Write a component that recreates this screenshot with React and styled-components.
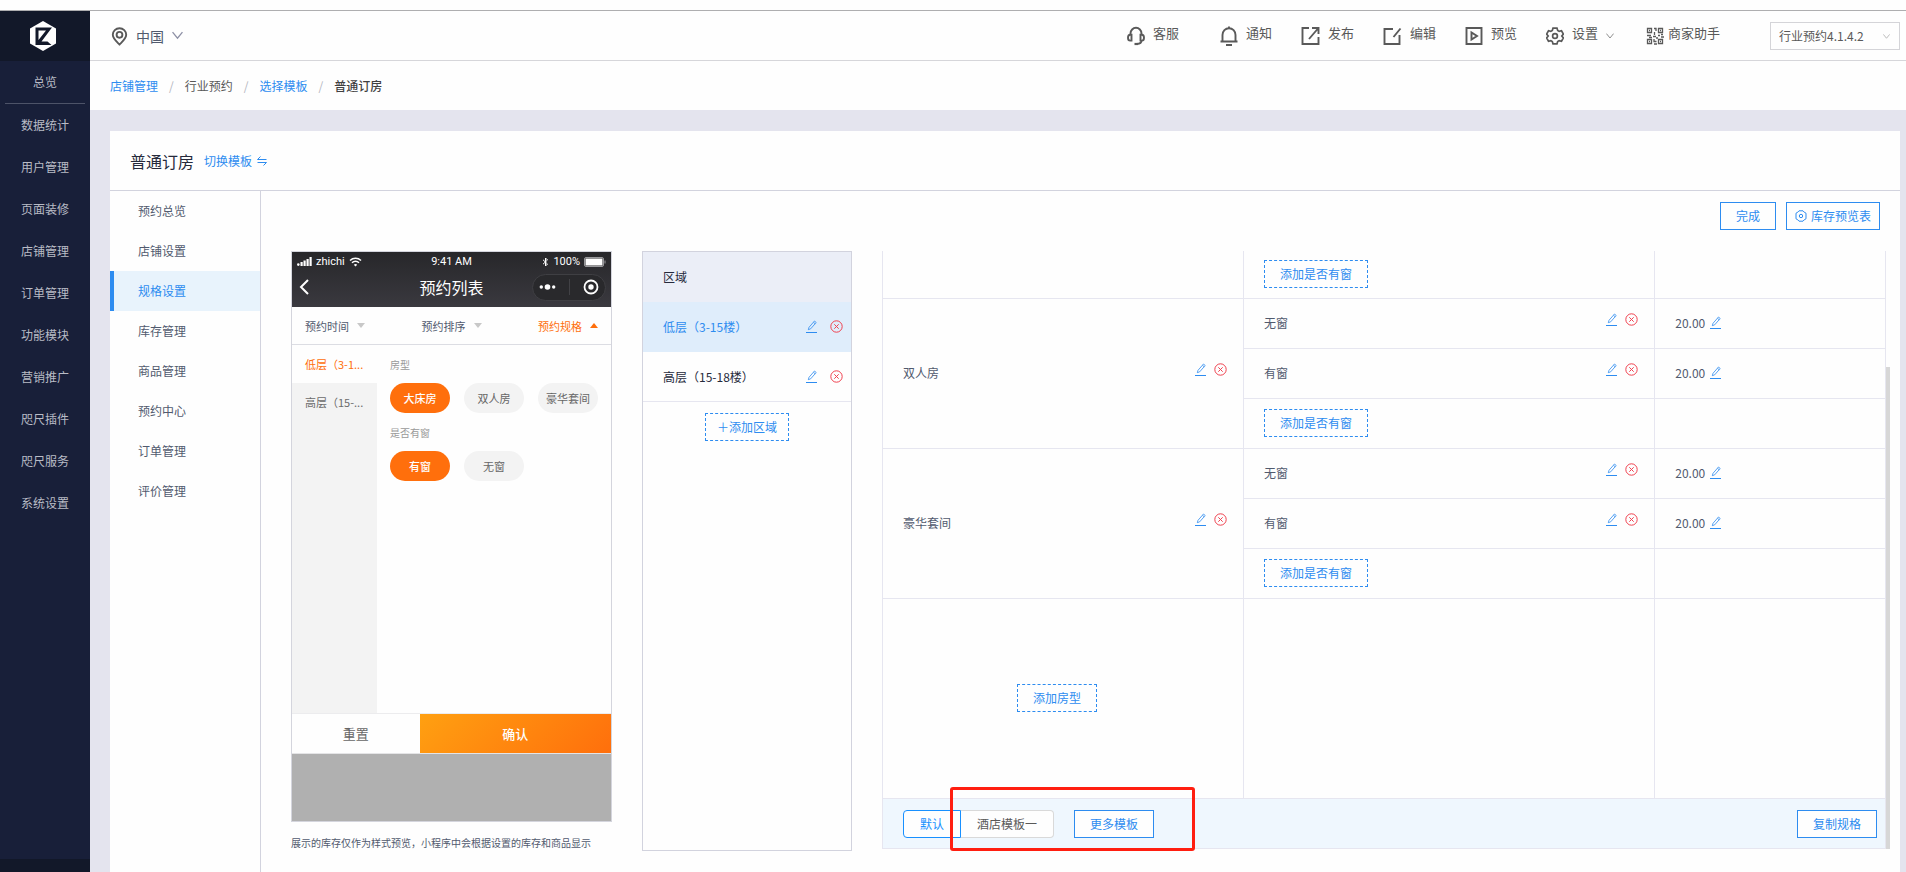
import React, { useState } from 'react'
import styled, { createGlobalStyle } from 'styled-components'

const color = {
  blue: '#2d8cf0',
  orange: '#ff6f0c',
  red: '#f0404e',
  text: '#595959',
  slate: '#515a6e',
  dark: '#262a3c',
  line: '#e6e6f0',
  frame: '#d2d3de',
  page: '#e4e4ee',
}

const GlobalStyle = createGlobalStyle`
  * {
    box-sizing: border-box;
  }

  body {
    margin: 0;
    background: #fefefe;
    color: ${color.text};
    font-family: 'Noto Sans CJK SC', sans-serif;
    font-size: 12px;
    line-height: 20px;
  }

  button, input, select {
    font: inherit;
  }

  a {
    color: inherit;
    text-decoration: none;
  }
`

const Page = styled.div`
  display: flex;
  flex-direction: column;
  min-height: 100vh;
`

const TopStrip = styled.div`
  height: 11px;
  border-bottom: 1px solid #aeaeb0;
`

const Shell = styled.div`
  display: flex;
  flex: 1;
`

/* Sidebar */

const Sidebar = styled.aside`
  display: flex;
  flex-direction: column;
  flex: none;
  width: 90px;
  background: #181f39;
`

const LogoBox = styled.a`
  display: flex;
  align-items: center;
  justify-content: center;
  height: 50px;
  padding-right: 4px;
  background: #121829;
`

const SideNav = styled.nav`
  display: flex;
  flex-direction: column;
`

const SideLink = styled.a`
  height: 42px;
  line-height: 42px;
  text-align: center;
  color: #b9bcc6;
`

const SideDivider = styled.hr`
  width: 80px;
  height: 1px;
  margin: 0 auto;
  border: 0;
  background: #4d5368;
`

const SideFoot = styled.div`
  height: 13px;
  margin-top: auto;
  background: #121829;
`

/* Header */

const Main = styled.main`
  display: flex;
  flex-direction: column;
  flex: 1;
  min-width: 0;
  background: ${color.page};
`

const Header = styled.header`
  display: flex;
  align-items: center;
  justify-content: space-between;
  height: 50px;
  padding: 0 6px 0 21px;
  background: #fefefe;
  border-bottom: 1px solid #d6d6da;
`

const PlainButton = styled.button`
  display: flex;
  align-items: center;
  padding: 0;
  border: 0;
  background: none;
  color: inherit;
  cursor: pointer;
`

const Location = styled(PlainButton)`
  gap: 8px;
  font-size: 14px;
  color: ${color.slate};
`

const Tools = styled.div`
  display: flex;
  align-items: center;
`

const Tool = styled(PlainButton)`
  gap: ${(props) => (props.$tight ? 4 : 8)}px;
  margin-right: ${(props) => props.$space || 29}px;
  font-size: 13px;

  span {
    padding-bottom: 6px;
  }
`

const VersionBox = styled.div`
  position: relative;
  width: 130px;

  svg {
    position: absolute;
    top: 11px;
    right: 10px;
    pointer-events: none;
  }
`

const VersionSelect = styled.select`
  width: 100%;
  height: 28px;
  padding: 0 8px;
  border: 1px solid #d4d4d8;
  border-radius: 0;
  background: #fefefe;
  color: ${color.text};
  appearance: none;
`

const Breadcrumb = styled.nav`
  display: flex;
  align-items: center;
  gap: 11px;
  height: 49px;
  padding-left: 20px;
  background: #fefefe;

  a {
    color: ${color.blue};
  }

  i {
    color: #b4b6be;
    font-style: normal;
  }

  strong {
    color: #404040;
    font-weight: 500;
  }
`

/* Card */

const Card = styled.section`
  display: flex;
  flex-direction: column;
  flex: 1;
  margin: 21px 6px 0 20px;
  background: #fefefe;
`

const CardHead = styled.div`
  display: flex;
  align-items: center;
  gap: 10px;
  height: 60px;
  padding: 0 20px;
  border-bottom: 1px solid ${color.frame};
`

const Title = styled.h1`
  margin: 0;
  color: ${color.dark};
  font-size: 16px;
  font-weight: 400;
`

const SwitchLink = styled.a`
  display: flex;
  align-items: center;
  gap: 5px;
  color: ${color.blue};
`

const CardBody = styled.div`
  display: flex;
  flex: 1;
`

const Menu = styled.nav`
  flex: none;
  width: 151px;
  border-right: 1px solid ${color.frame};
`

const MenuLink = styled.a`
  display: block;
  height: 40px;
  padding-left: 24px;
  border-left: 4px solid ${(props) => (props.$active ? color.blue : 'transparent')};
  background: ${(props) => (props.$active ? '#e8f3fc' : 'none')};
  color: ${(props) => (props.$active ? color.blue : color.slate)};
  line-height: 40px;
`

const Content = styled.div`
  flex: 1;
  min-width: 0;
`

const Toolbar = styled.div`
  display: flex;
  justify-content: flex-end;
  gap: 10px;
  padding: 11px 20px 21px;
`

const Button = styled.button`
  display: inline-flex;
  align-items: center;
  justify-content: center;
  gap: 4px;
  height: 28px;
  padding: 0 ${(props) => props.$pad || 15}px;
  border: 1px ${(props) => (props.$dashed ? 'dashed' : 'solid')} ${color.blue};
  background: #fefefe;
  color: ${color.blue};
  white-space: nowrap;
  cursor: pointer;
`

const Columns = styled.div`
  display: flex;
  align-items: flex-start;
  gap: 30px;
  padding: 0 10px 0 30px;
`

/* Phone preview */

const PreviewColumn = styled.div`
  flex: none;
  width: 321px;
`

const Phone = styled.div`
  display: flex;
  flex-direction: column;
  height: 571px;
  border: 1px solid #d4d5dd;
  background: #fefefe;
`

const PhoneTop = styled.div`
  height: 55px;
  padding: 0 5px;
  background: linear-gradient(#27272a, #3a393f);
  color: #fefefe;
`

const StatusRow = styled.div`
  display: grid;
  grid-template-columns: 1fr auto 1fr;
  align-items: center;
  height: 19px;
  font-family: Roboto, sans-serif;
  font-size: 11px;
  line-height: 19px;
`

const StatusGroup = styled.div`
  display: flex;
  align-items: center;
  justify-content: ${(props) => (props.$end ? 'flex-end' : 'flex-start')};
  gap: 4px;
`

const PhoneNav = styled.div`
  display: grid;
  grid-template-columns: 1fr auto 1fr;
  align-items: center;
  height: 32px;
  font-size: 16px;
`

const Capsule = styled.div`
  display: flex;
  align-items: center;
  justify-content: space-around;
  justify-self: end;
  width: 74px;
  height: 27px;
  border: 1px solid #3f3f43;
  border-radius: 14px;
  background: #29292c;
`

const FilterRow = styled.div`
  display: flex;
  justify-content: space-between;
  height: 38px;
  padding: 0 13px;
  border-bottom: 1px solid #dcdde3;
`

const Filter = styled(PlainButton)`
  gap: 8px;
  color: ${(props) => (props.$active ? color.orange : color.slate)};
  font-size: 11px;

  &::after {
    content: '';
    border: 4px solid transparent;
    border-top: ${(props) => (props.$active ? '0' : '5px solid #c8c8c8')};
    border-bottom: ${(props) => (props.$active ? `5px solid ${color.orange}` : '0')};
  }
`

const PhoneBody = styled.div`
  display: flex;
  flex: 1;
`

const FloorList = styled.div`
  display: flex;
  flex-direction: column;
  width: 86px;
  background: #f3f3f3;
`

const Floor = styled(PlainButton)`
  height: 38px;
  padding: 0 13px;
  background: ${(props) => (props.$active ? '#fefefe' : 'none')};
  color: ${(props) => (props.$active ? color.orange : '#6b6b6b')};
  font-size: 11px;
`

const SpecList = styled.div`
  padding: 10px 13px;
`

const SpecTitle = styled.div`
  color: #999;
  font-size: 10px;
`

const PillRow = styled.div`
  display: flex;
  gap: 14px;
  padding: 8px 0 10px;
`

const Pill = styled.button`
  width: 60px;
  height: 30px;
  padding: 0;
  border: 0;
  border-radius: 15px;
  background: ${(props) => (props.$active ? color.orange : '#f3f3f3')};
  color: ${(props) => (props.$active ? '#fefefe' : '#666')};
  font-size: 11px;
  font-weight: ${(props) => (props.$active ? 500 : 400)};
  cursor: pointer;
`

const PhoneActions = styled.div`
  display: grid;
  grid-template-columns: 2fr 3fr;
  height: 41px;
  border-top: 1px solid #ececee;
  border-bottom: 1px solid #e4e4e6;
`

const PhoneAction = styled.button`
  border: 0;
  background: ${(props) => (props.$primary ? `linear-gradient(135deg, #ffa011, ${color.orange})` : '#fefefe')};
  color: ${(props) => (props.$primary ? '#fefefe' : '#666')};
  font-size: 13px;
  font-weight: ${(props) => (props.$primary ? 500 : 400)};
  cursor: pointer;
`

const PhoneFoot = styled.div`
  height: 67px;
  background: #b0b0b0;
`

const Note = styled.p`
  margin: 11px 0 0;
  color: ${color.slate};
  font-size: 10px;
  white-space: nowrap;
`

/* Region list */

const RegionPanel = styled.div`
  flex: none;
  width: 210px;
  height: 600px;
  border: 1px solid ${color.frame};
  text-align: center;
`

const RegionHead = styled.h2`
  height: 50px;
  margin: 0;
  padding-left: 20px;
  background: #ebeef7;
  color: ${color.dark};
  font-size: 12px;
  font-weight: 400;
  line-height: 50px;
  text-align: left;
`

const RegionRow = styled.div`
  display: flex;
  align-items: center;
  justify-content: space-between;
  height: 50px;
  margin-bottom: ${(props) => (props.$active ? 0 : 11)}px;
  padding: 0 8px 0 20px;
  border-bottom: 1px solid ${(props) => (props.$active ? '#dfedfb' : color.line)};
  background: ${(props) => (props.$active ? '#dfedfb' : 'none')};
  color: ${(props) => (props.$active ? color.blue : color.dark)};
`

const RowIcons = styled.span`
  display: flex;
  align-items: center;
  gap: ${(props) => props.$gap || 8}px;
`

/* Spec table */

const TableColumn = styled.div`
  flex: 1;
  min-width: 0;
`

const Scroller = styled.div`
  display: flex;
`

const ScrollBody = styled.div`
  flex: 1;
  min-width: 0;
`

const ScrollThumb = styled.div`
  flex: none;
  width: 4px;
  margin-top: 116px;
  background: #d7d7d7;
`

const Table = styled.table`
  width: 100%;
  border-left: 1px solid ${color.line};
  border-spacing: 0;
  table-layout: fixed;
  color: ${color.slate};
`

const Cell = styled.td`
  height: ${(props) => props.$height || 50}px;
  padding: 0 ${(props) => (props.$center ? 32 : 16)}px 2px 20px;
  border-right: 1px solid ${color.line};
  border-bottom: 1px solid ${color.line};
  text-align: ${(props) => (props.$center ? 'center' : 'left')};

  ${Button} {
    vertical-align: middle;
  }
`

const CellRow = styled.div`
  display: flex;
  align-items: center;
  justify-content: ${(props) => (props.$start ? 'flex-start' : 'space-between')};
  gap: 5px;

  ${RowIcons} {
    padding-bottom: 6px;
  }
`

const TableFoot = styled.div`
  position: relative;
  display: flex;
  align-items: center;
  height: 50px;
  padding: 0 8px 0 20px;
  border: 1px solid ${color.line};
  border-top: 0;
  background: #eff7fe;

  > ${Button}:last-of-type {
    margin-left: auto;
  }
`

const TemplateGroup = styled.div`
  display: flex;
  margin-right: 20px;
`

const TemplateOption = styled.label`
  height: 28px;
  padding: 0 16px;
  border: 1px solid ${(props) => (props.$active ? '#1890ff' : '#d9d9d9')};
  border-left-width: ${(props) => (props.$active ? 1 : 0)}px;
  background: #fefefe;
  color: ${(props) => (props.$active ? '#1890ff' : color.text)};
  line-height: 26px;
  cursor: pointer;

  &:first-child {
    border-radius: 4px 0 0 4px;
  }

  &:last-child {
    border-radius: 0 4px 4px 0;
  }

  input {
    position: absolute;
    opacity: 0;
    pointer-events: none;
  }
`

const Highlight = styled.div`
  position: absolute;
  top: -12px;
  left: 67px;
  width: 245px;
  height: 64px;
  border: 3px solid #ff1e10;
  border-radius: 3px;
  pointer-events: none;
`

/* Icons */

const Chevron = ({ size = 8, stroke = '#8a8a8a' }) => (
  <svg width={size} height={size} viewBox="0 0 10 10" fill="none" stroke={stroke} strokeWidth="1.2">
    <path d="M0.5 2 5 7.5 9.5 2" />
  </svg>
)

const Logo = () => (
  <svg width="28" height="32" viewBox="0 0 28 32">
    <path d="M14 1 27 8.500V23.500L14 31 1 23.500V8.500Z" fill="#fefefe" />
    <path
      d="M6.500 7.500H23L12.500 21.500H18.500L22.500 25H6.500ZM9.500 10.500V20L17 10.500Z"
      fill="#121829"
      fillRule="evenodd"
    />
  </svg>
)

const PinIcon = () => (
  <svg width="17" height="21" viewBox="0 -2 17 21" fill="none" stroke="#595959" strokeWidth="1.9">
    <path d="M8.500 17.500C5 14 1.800 11.500 1.800 7.800a6.700 6.600 0 0 1 13.400 0C15.200 11.500 12 14 8.500 17.500Z" />
    <circle cx="8.500" cy="7.800" r="2.900" />
  </svg>
)

const ToolIcon = ({ children, width = 18 }) => (
  <svg
    width={width}
    height="20"
    viewBox={`0 0 ${width} 20`}
    fill="none"
    stroke="#595959"
    strokeWidth="1.9"
  >
    {children}
  </svg>
)

const HeadsetIcon = () => (
  <ToolIcon>
    <path d="M3.500 9V7.500a5.500 5.700 0 0 1 11 0V9M14.500 14.500c0 2-1.500 3.300-4.500 3.500" />
    <path d="M4.500 8.800H3.200a2.200 2.900 0 0 0 0 5.800H4.500ZM13.500 8.800h1.300a2.200 2.900 0 0 1 0 5.800H13.500Z" />
    <path d="M7.500 18h3.500" strokeWidth="2.200" />
  </ToolIcon>
)

const BellIcon = () => (
  <ToolIcon>
    <path d="M2.500 15V9a6.500 6.800 0 0 1 13 0v6M0.500 15.500h17M9 0.500v2" />
    <path d="M6 19h6" strokeWidth="2" />
  </ToolIcon>
)

const PublishIcon = () => (
  <ToolIcon width={19}>
    <path d="M8 2H1.500V18H17.500V11M11 2h6.500v6M17 2.500 8 13" />
  </ToolIcon>
)

const EditIcon = () => (
  <ToolIcon width={19}>
    <path d="M10 3H1.500V18H16.500V9M17.500 2.500 10.500 11" />
  </ToolIcon>
)

const PreviewIcon = () => (
  <ToolIcon>
    <path d="M1.500 2H16.500V18H1.500Z" />
    <path d="M6.500 6.500V13.500L12 10Z" />
  </ToolIcon>
)

const GearIcon = () => (
  <ToolIcon>
    <path
      d="M7 2.200h4l.7 2.300 1.500.9 2.300-.6 1.900 3.300-1.600 1.900 1.600 1.900-1.900 3.300-2.300-.6-1.500.9L11 17.800H7l-.7-2.300-1.500-.9-2.300.6L.600 11.900 2.200 10 .600 8.100l1.900-3.300 2.300.6 1.500-.9Z"
      strokeWidth="1.700"
    />
    <circle cx="9" cy="10" r="2.400" strokeWidth="1.700" />
  </ToolIcon>
)

const QrIcon = () => (
  <ToolIcon>
    <g strokeWidth="1.300">
      <path d="M1.500 2.500h4v4h-4ZM12.500 2.500h4v4h-4ZM1.500 13.500h4v4h-4ZM12.500 13.500h4v4h-4Z" />
      <path d="M8 2.500h2v2.500M8.500 6v3M1 9.500h4M3 11.500h3M7 10.500h3M12 9.500h2M15 11h3M15 8.500h2M8 13v2.500h2.500M8 18h3M10 12h2" />
      <path d="M3 4.500h1M14 4.500h1M3 15.500h1M14 15.500h1" />
    </g>
  </ToolIcon>
)

const SwapIcon = () => (
  <svg width="10" height="10" viewBox="0 0 10 10" fill="none" stroke={color.blue}>
    <path d="M3.500 0.500 0.500 3.500H9.500M0.500 6.500H9.500L6.500 9.500" />
  </svg>
)

const StockIcon = () => (
  <svg width="12" height="12" viewBox="0 0 12 12" fill="none" stroke={color.blue}>
    <path d="M4 .800h4l1.200 1.400 1.800 1V8.800L9.200 9.800 8 11.200H4L2.800 9.800 1 8.800V3.200l1.800-1Z" />
    <circle cx="6" cy="6" r="1.700" />
  </svg>
)

const PenIcon = () => (
  <svg width="11" height="13" viewBox="0 0 11 13" fill="none" stroke={color.blue}>
    <path d="M0 12.500H11" />
    <path d="M2.300 9.700 3 7.300 8.500 1 10.200 2.500 4.700 8.800ZM7.500 2.300 9.200 3.800" strokeWidth="0.800" />
  </svg>
)

const RemoveIcon = () => (
  <svg width="13" height="13" viewBox="0 0 13 13" fill="none" stroke={color.red}>
    <circle cx="6.500" cy="6.500" r="5.700" />
    <path d="M4.300 4.300 8.700 8.700M8.700 4.300 4.300 8.700" />
  </svg>
)

const SignalIcon = () => (
  <svg width="15" height="9" viewBox="0 0 15 9" fill="#fefefe">
    <circle cx="1.300" cy="7.600" r="1.300" />
    <path d="M3.500 5h2.200v4H3.500ZM6.500 3.500h2.200V9H6.500ZM9.500 2h2.200v7H9.500ZM12.500 0h2.200v9h-2.200Z" />
  </svg>
)

const WifiIcon = () => (
  <svg width="13" height="10" viewBox="0 0 13 10" fill="none" stroke="#fefefe" strokeWidth="1.500">
    <path d="M1 3.500a8 8 0 0 1 11 0M3 5.800a5 5 0 0 1 7 0" />
    <path d="M6.500 9.500 4.800 7.800a2.400 2.400 0 0 1 3.400 0Z" fill="#fefefe" stroke="none" />
  </svg>
)

const BluetoothIcon = () => (
  <svg width="7" height="10" viewBox="0 0 7 10" fill="none" stroke="#fefefe">
    <path d="M1 2.800 5.500 7 3.500 9V1L5.500 3 1 7.200" />
  </svg>
)

const BatteryIcon = () => (
  <svg width="22" height="10" viewBox="0 0 22 10">
    <rect x="0.500" y="0.500" width="19" height="9" rx="1.500" fill="none" stroke="#99999c" />
    <rect x="1.500" y="1.500" width="17" height="7" fill="#fefefe" />
    <path d="M21 3.500V6.500" stroke="#99999c" />
  </svg>
)

const BackIcon = () => (
  <svg width="12" height="16" viewBox="0 0 12 16" fill="none" stroke="#fefefe" strokeWidth="2">
    <path d="M11 1 4 8 11 15" />
  </svg>
)

const DotsIcon = () => (
  <svg width="17" height="6" viewBox="0 0 17 6" fill="#fefefe">
    <circle cx="2.300" cy="3" r="1.700" />
    <circle cx="8.500" cy="3" r="2.800" />
    <circle cx="14.700" cy="3" r="1.700" />
  </svg>
)

const TargetIcon = () => (
  <svg width="16" height="16" viewBox="0 0 16 16">
    <circle cx="8" cy="8" r="6.500" fill="none" stroke="#fefefe" strokeWidth="1.800" />
    <circle cx="8" cy="8" r="2.700" fill="#fefefe" />
  </svg>
)

const Separator = styled.span`
  width: 1px;
  height: 16px;
  background: #414145;
`

/* Data */

const sideLinks = [
  '数据统计',
  '用户管理',
  '页面装修',
  '店铺管理',
  '订单管理',
  '功能模块',
  '营销推广',
  '咫尺插件',
  '咫尺服务',
  '系统设置',
]

const menuLinks = [
  '预约总览',
  '店铺设置',
  '规格设置',
  '库存管理',
  '商品管理',
  '预约中心',
  '订单管理',
  '评价管理',
]

const tools = [
  { text: '客服', icon: <HeadsetIcon />, space: 41 },
  { text: '通知', icon: <BellIcon /> },
  { text: '发布', icon: <PublishIcon /> },
  { text: '编辑', icon: <EditIcon /> },
  { text: '预览', icon: <PreviewIcon /> },
  { text: '设置', icon: <GearIcon />, space: 32, menu: true },
  { text: '商家助手', icon: <QrIcon />, space: 50, tight: true },
]

const regions = ['低层（3-15楼）', '高层（15-18楼）']
const rooms = ['双人房', '豪华套间']
const templates = ['默认', '酒店模板一']

function EditButtons({ name, gap }) {
  return (
    <RowIcons $gap={gap}>
      <PlainButton aria-label={`编辑${name}`}>
        <PenIcon />
      </PlainButton>
      <PlainButton aria-label={`删除${name}`}>
        <RemoveIcon />
      </PlainButton>
    </RowIcons>
  )
}

function PhonePreview() {
  const [roomType, setRoomType] = useState('大床房')
  const [view, setView] = useState('有窗')

  return (
    <PreviewColumn>
      <Phone>
        <PhoneTop>
          <StatusRow>
            <StatusGroup>
              <SignalIcon />
              zhichi
              <WifiIcon />
            </StatusGroup>
            <span>9:41 AM</span>
            <StatusGroup $end>
              <BluetoothIcon />
              100%
              <BatteryIcon />
            </StatusGroup>
          </StatusRow>
          <PhoneNav>
            <BackIcon />
            <span>预约列表</span>
            <Capsule>
              <DotsIcon />
              <Separator />
              <TargetIcon />
            </Capsule>
          </PhoneNav>
        </PhoneTop>

        <FilterRow>
          <Filter>预约时间</Filter>
          <Filter>预约排序</Filter>
          <Filter $active>预约规格</Filter>
        </FilterRow>

        <PhoneBody>
          <FloorList>
            <Floor $active>低层（3-1...</Floor>
            <Floor>高层（15-...</Floor>
          </FloorList>
          <SpecList>
            <SpecTitle>房型</SpecTitle>
            <PillRow>
              {['大床房', '双人房', '豪华套间'].map((item) => (
                <Pill key={item} $active={item === roomType} onClick={() => setRoomType(item)}>
                  {item}
                </Pill>
              ))}
            </PillRow>
            <SpecTitle>是否有窗</SpecTitle>
            <PillRow>
              {['有窗', '无窗'].map((item) => (
                <Pill key={item} $active={item === view} onClick={() => setView(item)}>
                  {item}
                </Pill>
              ))}
            </PillRow>
          </SpecList>
        </PhoneBody>

        <PhoneActions>
          <PhoneAction>重置</PhoneAction>
          <PhoneAction $primary>确认</PhoneAction>
        </PhoneActions>
        <PhoneFoot />
      </Phone>
      <Note>展示的库存仅作为样式预览，小程序中会根据设置的库存和商品显示</Note>
    </PreviewColumn>
  )
}

function Regions() {
  return (
    <RegionPanel>
      <RegionHead>区域</RegionHead>
      {regions.map((name, index) => (
        <RegionRow key={name} $active={index === 0}>
          {name}
          <EditButtons name={name} gap={13} />
        </RegionRow>
      ))}
      <Button $dashed $pad={11}>
        ＋添加区域
      </Button>
    </RegionPanel>
  )
}

function OptionCells({ name }) {
  return (
    <>
      <Cell>
        <CellRow>
          {name}
          <EditButtons name={name} />
        </CellRow>
      </Cell>
      <Cell>
        <CellRow $start>
          20.00
          <PlainButton aria-label="编辑价格">
            <PenIcon />
          </PlainButton>
        </CellRow>
      </Cell>
    </>
  )
}

function SpecTable() {
  const [template, setTemplate] = useState('默认')

  return (
    <TableColumn>
      <Scroller>
        <ScrollBody>
          <Table>
            <colgroup>
              <col width="36%" />
              <col width="41%" />
              <col width="23%" />
            </colgroup>
            <tbody>
              <tr>
                <Cell $height={48} />
                <Cell $height={48}>
                  <Button $dashed>添加是否有窗</Button>
                </Cell>
                <Cell $height={48} />
              </tr>
              {rooms.map((room) => (
                <React.Fragment key={room}>
                  <tr>
                    <Cell rowSpan={3}>
                      <CellRow>
                        {room}
                        <EditButtons name={room} />
                      </CellRow>
                    </Cell>
                    <OptionCells name="无窗" />
                  </tr>
                  <tr>
                    <OptionCells name="有窗" />
                  </tr>
                  <tr>
                    <Cell>
                      <Button $dashed>添加是否有窗</Button>
                    </Cell>
                    <Cell />
                  </tr>
                </React.Fragment>
              ))}
              <tr>
                <Cell $height={200} $center>
                  <Button $dashed>添加房型</Button>
                </Cell>
                <Cell />
                <Cell />
              </tr>
            </tbody>
          </Table>
          <TableFoot>
            <TemplateGroup role="radiogroup" aria-label="模板">
              {templates.map((name) => (
                <TemplateOption key={name} $active={name === template}>
                  <input
                    type="radio"
                    name="template"
                    checked={name === template}
                    onChange={() => setTemplate(name)}
                  />
                  {name}
                </TemplateOption>
              ))}
            </TemplateGroup>
            <Button>更多模板</Button>
            <Button>复制规格</Button>
            <Highlight />
          </TableFoot>
        </ScrollBody>
        <ScrollThumb />
      </Scroller>
    </TableColumn>
  )
}

function App() {
  return (
    <Page>
      <GlobalStyle />
      <TopStrip />
      <Shell>
        <Sidebar>
          <LogoBox href="#" aria-label="首页">
            <Logo />
          </LogoBox>
          <SideNav>
            <SideLink href="#">总览</SideLink>
            <SideDivider />
            {sideLinks.map((text) => (
              <SideLink key={text} href="#">
                {text}
              </SideLink>
            ))}
          </SideNav>
          <SideFoot />
        </Sidebar>

        <Main>
          <Header>
            <Location>
              <PinIcon />
              中国
              <Chevron size={11} stroke="#8d90a5" />
            </Location>
            <Tools>
              {tools.map(({ text, icon, space, menu, tight }) => (
                <Tool key={text} $space={space} $tight={tight}>
                  {icon}
                  <span>{text}</span>
                  {menu && <Chevron />}
                </Tool>
              ))}
              <VersionBox>
                <VersionSelect aria-label="版本">
                  <option>行业预约4.1.4.2</option>
                </VersionSelect>
                <Chevron size={7} stroke="#b0b0b0" />
              </VersionBox>
            </Tools>
          </Header>

          <Breadcrumb>
            <a href="#">店铺管理</a>
            <i>/</i>
            <span>行业预约</span>
            <i>/</i>
            <a href="#">选择模板</a>
            <i>/</i>
            <strong>普通订房</strong>
          </Breadcrumb>

          <Card>
            <CardHead>
              <Title>普通订房</Title>
              <SwitchLink href="#">
                切换模板
                <SwapIcon />
              </SwitchLink>
            </CardHead>
            <CardBody>
              <Menu>
                {menuLinks.map((text) => (
                  <MenuLink key={text} href="#" $active={text === '规格设置'}>
                    {text}
                  </MenuLink>
                ))}
              </Menu>
              <Content>
                <Toolbar>
                  <Button>完成</Button>
                  <Button $pad={8}>
                    <StockIcon />
                    库存预览表
                  </Button>
                </Toolbar>
                <Columns>
                  <PhonePreview />
                  <Regions />
                  <SpecTable />
                </Columns>
              </Content>
            </CardBody>
          </Card>
        </Main>
      </Shell>
    </Page>
  )
}

export default App
